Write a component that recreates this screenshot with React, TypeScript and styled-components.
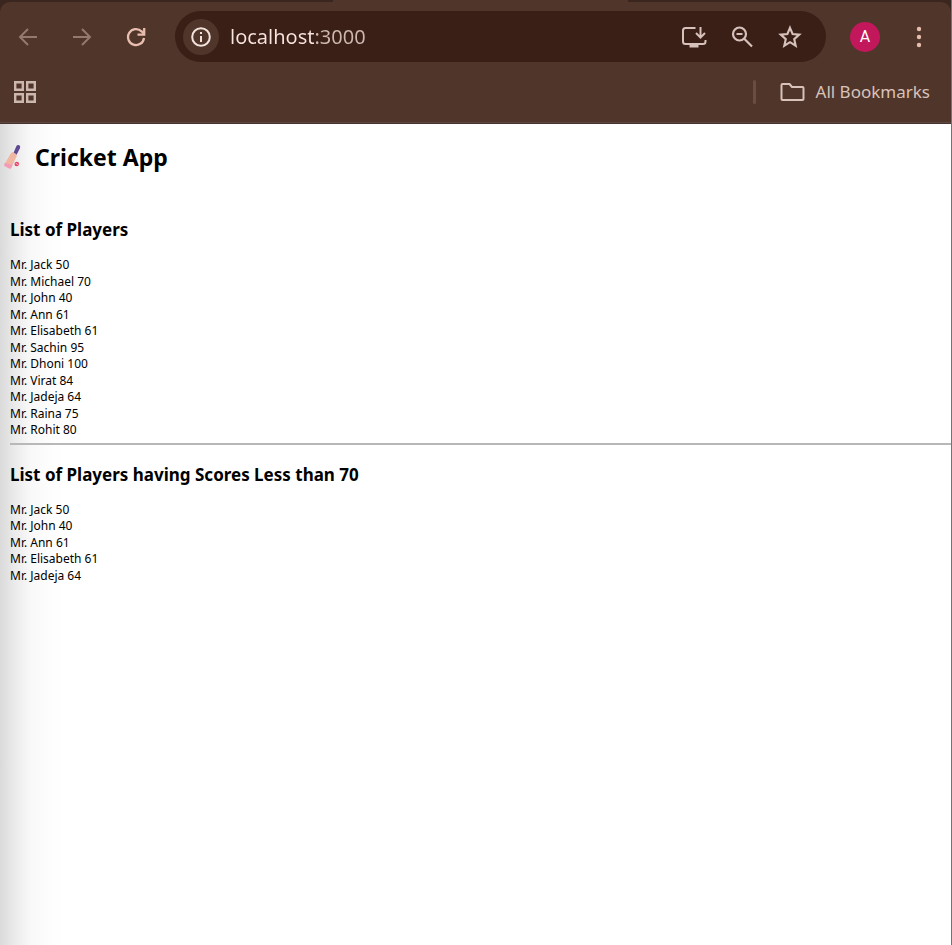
import React from "react";
import styled, { createGlobalStyle } from "styled-components";

const GlobalStyle = createGlobalStyle`
  * { box-sizing: border-box; }
  html, body, #root { height: 100%; }
  body {
    margin: 0;
    background: #fff;
    color: #000;
    font-family: "Noto Sans", "Open Sans", sans-serif;
  }
`;

const Window = styled.div`
  display: flex;
  flex-direction: column;
  min-height: 100%;
  background: #fff;
  border-right: 1px solid #747474;
`;

const Chrome = styled.header`
  background: #3b251f;
  border-bottom: 1px solid #47332c;
`;

const TabStrip = styled.div`
  display: flex;
  height: 2px;
`;

const ActiveTab = styled.div`
  width: 31%;
  margin-left: 35%;
  background: #50352b;
`;

const Toolbars = styled.div`
  background: #50352b;
  border-radius: 10px 10px 0 0;
  border-bottom: 1px solid #5d4740;
`;

const Toolbar = styled.div`
  display: flex;
  align-items: center;
  height: 69px;
  padding: 0 17px 0 13px;
`;

const IconButton = styled.button<{ $tone?: string }>`
  display: flex;
  align-items: center;
  justify-content: center;
  flex: none;
  width: 30px;
  height: 30px;
  padding: 0;
  border: 0;
  border-radius: 50%;
  background: transparent;
  color: ${(p) => p.$tone || "#d6c2bb"};
`;

const Navigation = styled.nav`
  display: flex;
  gap: 24px;
`;

const AddressBar = styled.div`
  display: flex;
  align-items: center;
  flex: 1;
  height: 51px;
  margin-left: 24px;
  padding: 0 21px 0 8px;
  border-radius: 26px;
  background: #3a1f17;
`;

const SiteInfo = styled(IconButton)`
  width: 36px;
  height: 36px;
  background: #50352b;
`;

const Address = styled.input`
  flex: 1;
  min-width: 0;
  height: 30px;
  margin-left: 11px;
  padding: 0;
  border: 0;
  outline: 0;
  background: linear-gradient(to right, #f8e5df 84px, #cdb7af 84px);
  background-clip: text;
  -webkit-text-fill-color: transparent;
  font: 400 20px/30px "Noto Sans", "Open Sans", sans-serif;
`;

const AddressActions = styled.div`
  display: flex;
  gap: 18px;
`;

const Avatar = styled(IconButton)`
  margin: 0 24px;
  background: #c2185b;
  color: #fff;
  font: 400 16px/30px Roboto, sans-serif;
`;

const BookmarkBar = styled.div`
  display: flex;
  align-items: center;
  justify-content: space-between;
  height: 51px;
  padding: 0 21px 9px 10px;
`;

const BookmarkGroup = styled.div`
  display: flex;
  align-items: center;
  gap: 24px;
`;

const Divider = styled.span`
  width: 3px;
  height: 24px;
  border-radius: 2px;
  background: #6c4b41;
`;

const BookmarkButton = styled.button`
  display: flex;
  align-items: center;
  gap: 11px;
  padding: 0;
  border: 0;
  background: transparent;
  color: #d8c2ba;
  font: 400 17px/24px "Noto Sans", "Open Sans", sans-serif;
`;

const Page = styled.main`
  flex: 1;
  background: linear-gradient(to right, #dadada 0, #ebebeb 15px, #f8f8f8 30px, #fefefe 54px, #fff 66px);
`;

const AppTitle = styled.h1`
  display: flex;
  align-items: center;
  gap: 14px;
  margin: 0;
  padding: 17px 0 0 3px;
  font-size: 23px;
  line-height: 32px;
`;

const Section = styled.section<{ $top: number }>`
  padding: ${(p) => p.$top}px 0 0 10px;
`;

const SectionTitle = styled.h2`
  margin: 0 0 15px;
  font-size: 17px;
  line-height: 24px;
`;

const PlayerList = styled.ul`
  margin: 0;
  padding: 0;
  list-style: none;
  font-size: 12px;
  line-height: 1.375;
`;

const Rule = styled.hr`
  height: 2px;
  margin: 4px 0 0 10px;
  border: 0;
  background: #b7b8b7;
`;

type Player = { name: string; score: number };

const players: Player[] = [
  { name: "Jack", score: 50 },
  { name: "Michael", score: 70 },
  { name: "John", score: 40 },
  { name: "Ann", score: 61 },
  { name: "Elisabeth", score: 61 },
  { name: "Sachin", score: 95 },
  { name: "Dhoni", score: 100 },
  { name: "Virat", score: 84 },
  { name: "Jadeja", score: 64 },
  { name: "Raina", score: 75 },
  { name: "Rohit", score: 80 },
];

const Players = ({ items }: { items: Player[] }) => (
  <PlayerList>
    {items.map((p) => (
      <li key={p.name}>{`Mr. ${p.name} ${p.score}`}</li>
    ))}
  </PlayerList>
);

const Arrow = ({ forward = false }: { forward?: boolean }) => (
  <svg width="20" height="20" viewBox="0 0 20 20" fill="none" stroke="currentColor" strokeWidth="2">
    {forward ? <path d="M1 10h17M10 2l8 8-8 8" /> : <path d="M19 10H2M10 2l-8 8 8 8" />}
  </svg>
);

const Reload = () => (
  <svg width="20" height="20" viewBox="0 0 20 20" fill="none" stroke="currentColor" strokeWidth="2.3">
    <path d="M18 11a8 8 0 1 1-2.4-6.7L18 7" />
    <path d="M18.2 1v6.7h-6.7" />
  </svg>
);

const Info = () => (
  <svg width="20" height="20" viewBox="0 0 20 20" fill="none" stroke="#f3e2dc" strokeWidth="2">
    <circle cx="10" cy="10" r="8.8" />
    <path d="M10 9v6M10 5v2" />
  </svg>
);

const Install = () => (
  <svg width="26" height="24" viewBox="0 0 26 24" fill="none" stroke="currentColor" strokeWidth="2">
    <path d="M14.500 3H4.500Q2 3 2 5.500V16.500Q2 19 4.500 19H22Q24.500 19 24.500 16.500V15" />
    <path d="M19.500 2V12M15 8l4.500 4.500L24 8" />
    <path d="M8.500 19H17.500V22.500H8.500Z" fill="currentColor" stroke="none" />
  </svg>
);

const ZoomOut = () => (
  <svg width="22" height="22" viewBox="0 0 22 22" fill="none" stroke="currentColor" strokeWidth="2.2">
    <circle cx="8.500" cy="8" r="6.500" />
    <path d="M5.500 8h6M13 12.500l8 8" />
  </svg>
);

const Star = () => (
  <svg width="24" height="24" viewBox="0 0 24 24" fill="none" stroke="currentColor" strokeWidth="2.1">
    <path d="M12 2.800l2.600 6.200 6.700.6-5.100 4.500 1.500 6.600-5.700-3.500-5.700 3.500 1.500-6.600L2.700 9.600l6.700-.6Z" />
  </svg>
);

const Dots = () => (
  <svg width="6" height="22" viewBox="0 0 6 22" fill="currentColor">
    <circle cx="3" cy="3" r="2.200" />
    <circle cx="3" cy="11" r="2.200" />
    <circle cx="3" cy="19" r="2.200" />
  </svg>
);

const Apps = () => (
  <svg width="22" height="22" viewBox="0 0 22 22" fill="none" stroke="currentColor" strokeWidth="2.400">
    <path d="M1.200 1.200H8.800V8.800H1.200ZM13.200 1.200H20.800V8.800H13.200ZM1.200 13.200H8.800V20.800H1.200ZM13.200 13.200H20.800V20.800H13.200Z" />
  </svg>
);

const Folder = () => (
  <svg width="25" height="20" viewBox="0 0 25 20" fill="none" stroke="currentColor" strokeWidth="2" strokeLinejoin="round">
    <path d="M1.500 3Q1.500 2 2.500 2H9.500L12 5H22.500Q23.500 5 23.500 6V17Q23.500 18 22.500 18H2.500Q1.500 18 1.500 17Z" />
  </svg>
);

const CricketBat = () => (
  <svg width="18" height="26" viewBox="0 0 18 26" aria-hidden="true">
    <path d="M10.300 9.500L13.300 2.300Q14.300.5 16.300 1.300 17.800 2.100 16.900 4.200L13.500 11Z" fill="#5f4894" />
    <path d="M8 9.300Q9 8 10.200 8.500L13.200 10Q14.200 10.800 13.700 12L8.400 23.400Q7.800 25 6.300 24.500L2 22.300Q.8 21.600 1.400 20.300Z" fill="#f0b7a3" />
    <path d="M2 18.800L9.600 21 8.400 23.400Q7.800 25 6.300 24.500L2 22.300Q.8 21.600 1.400 20.300Z" fill="#f49bb9" />
    <circle cx="13.800" cy="20" r="2.300" fill="#e6416c" />
    <path d="M12.500 19l3 2" stroke="#fbd3dd" strokeWidth="0.800" />
  </svg>
);

export default function App() {
  return (
    <Window>
      <GlobalStyle />
      <Chrome>
        <TabStrip>
          <ActiveTab />
        </TabStrip>
        <Toolbars>
          <Toolbar>
            <Navigation>
              <IconButton $tone="#957870" aria-label="Back"><Arrow /></IconButton>
              <IconButton $tone="#957870" aria-label="Forward"><Arrow forward /></IconButton>
              <IconButton $tone="#e8bdae" aria-label="Reload"><Reload /></IconButton>
            </Navigation>
            <AddressBar>
              <SiteInfo aria-label="Site information"><Info /></SiteInfo>
              <Address aria-label="Address" defaultValue="localhost:3000" spellCheck={false} />
              <AddressActions>
                <IconButton aria-label="Install app"><Install /></IconButton>
                <IconButton aria-label="Zoom"><ZoomOut /></IconButton>
                <IconButton aria-label="Bookmark this page"><Star /></IconButton>
              </AddressActions>
            </AddressBar>
            <Avatar aria-label="Profile">A</Avatar>
            <IconButton $tone="#e8bdae" aria-label="Menu"><Dots /></IconButton>
          </Toolbar>
          <BookmarkBar>
            <IconButton $tone="#ccb7af" aria-label="Apps"><Apps /></IconButton>
            <BookmarkGroup>
              <Divider />
              <BookmarkButton><Folder />All Bookmarks</BookmarkButton>
            </BookmarkGroup>
          </BookmarkBar>
        </Toolbars>
      </Chrome>
      <Page>
        <AppTitle><CricketBat />Cricket App</AppTitle>
        <Section $top={45}>
          <SectionTitle>List of Players</SectionTitle>
          <Players items={players} />
        </Section>
        <Rule />
        <Section $top={18}>
          <SectionTitle>List of Players having Scores Less than 70</SectionTitle>
          <Players items={players.filter((p) => p.score < 70)} />
        </Section>
      </Page>
    </Window>
  );
}
